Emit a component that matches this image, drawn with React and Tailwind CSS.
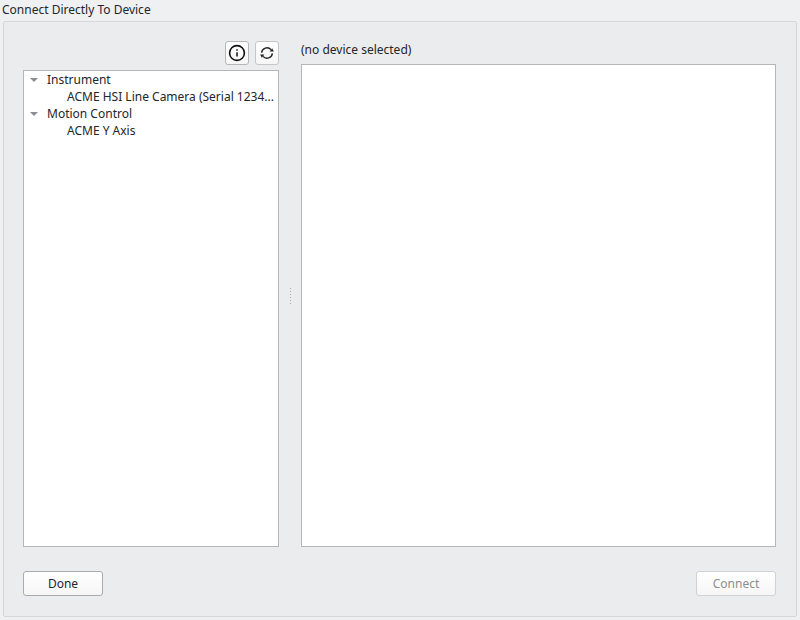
function InfoIcon() {
    return (
        <svg width="18" height="18" viewBox="0 0 18 18" fill="none" stroke="#111" strokeWidth="1.6">
            <circle cx="9" cy="9" r="7.4" />
            <path d="M9 8.2v4.2" strokeWidth="1.5" />
            <path d="M9 5.2v1.6" strokeWidth="1.5" />
        </svg>
    )
}

function RefreshIcon() {
    return (
        <svg width="18" height="18" viewBox="0 0 18 18" fill="none" stroke="#222" strokeWidth="1.4">
            <path d="M3.6 8.6A5.4 5.4 0 0 1 13 5.6" />
            <path d="M14.4 9.4A5.4 5.4 0 0 1 5 12.4" />
            <path d="M11.6 7.6h4.2l-1.6-3.4z" fill="#222" stroke="none" />
            <path d="M6.4 10.4H2.2l1.6 3.4z" fill="#222" stroke="none" />
        </svg>
    )
}

function Caret() {
    return <span className="w-0 h-0 border-l-[4px] border-r-[4px] border-t-[4px] border-l-transparent border-r-transparent border-t-[#8a8e92]"></span>
}

function TreeGroup({ name, children }) {
    return (
        <div>
            <div className="flex items-center h-[17px] pl-[6px]">
                <Caret />
                <span className="ml-[9px]">{name}</span>
            </div>
            <div className="flex items-center h-[17px] pl-[43px] whitespace-nowrap">{children}</div>
        </div>
    )
}

export default function App() {
    return (
        <div className="w-[800px] h-[620px] flex flex-col bg-[#eff0f1] text-[12px] text-[#232629] font-['Noto_Sans',sans-serif] overflow-hidden">
            <div className="h-[21px] pl-[2px] pt-[1px] leading-[18px] shrink-0">Connect Directly To Device</div>
            <div className="mx-[3px] h-[596px] border border-[#d5d7d9] rounded-[2px] bg-[#ebecee] pt-[19px] pl-[19px] pr-[20px] flex flex-col">
                <div className="flex h-[506px]">
                    <div className="w-[256px] flex flex-col">
                        <div className="flex justify-end gap-[6px] h-[29px] shrink-0">
                            <button className="w-[24px] h-[24px] flex items-center justify-center rounded-[3px] border border-[#b4b6b8] bg-gradient-to-b from-white to-[#f6f6f7]"><InfoIcon /></button>
                            <button className="w-[24px] h-[24px] flex items-center justify-center rounded-[3px] border border-[#c4c6c8] bg-gradient-to-b from-white to-[#f6f6f7]"><RefreshIcon /></button>
                        </div>
                        <div className="flex-1 bg-white border border-[#b4b6b8]">
                            <TreeGroup name="Instrument">ACME HSI Line Camera (Serial 1234...</TreeGroup>
                            <TreeGroup name="Motion Control">ACME Y Axis</TreeGroup>
                        </div>
                    </div>
                    <div className="w-[22px] flex flex-col items-center justify-center gap-[2px] pt-[4px]">
                        {[0, 1, 2, 3, 4, 5].map(i => <span key={i} className="w-[1px] h-[1px] bg-[#a9abad]"></span>)}
                    </div>
                    <div className="w-[475px] flex flex-col">
                        <div className="h-[23px] shrink-0 leading-[18px]">(no device selected)</div>
                        <div className="flex-1 bg-white border border-[#b4b6b8]"></div>
                    </div>
                </div>
                <div className="flex justify-between mt-[24px]">
                    <button className="w-[80px] h-[25px] rounded-[3px] border border-[#a9abad] bg-gradient-to-b from-white to-[#f6f6f7]">Done</button>
                    <button className="w-[80px] h-[25px] rounded-[3px] border border-[#cfd1d3] bg-gradient-to-b from-white to-[#f6f6f7] text-[#8b8e90]">Connect</button>
                </div>
            </div>
        </div>
    )
}
